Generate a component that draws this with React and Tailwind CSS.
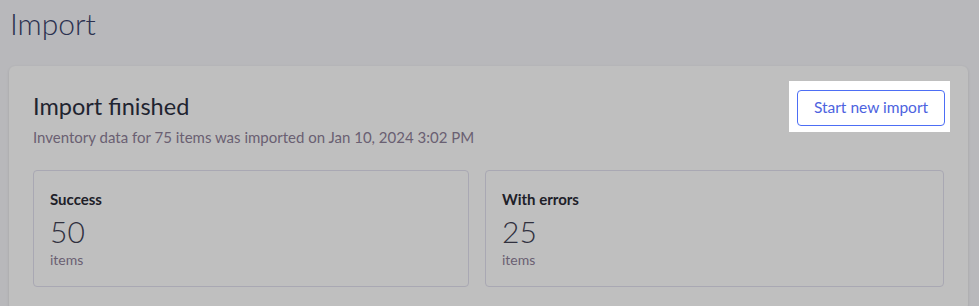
export default function App() {
  const stats = [
    { label: "Success", value: 50 },
    { label: "With errors", value: 25 },
  ];

  return (
    <div
      className="min-h-[306px] overflow-hidden bg-[#b8b8bb] pl-[9px] pr-[11px] pt-[3px]"
      style={{ fontFamily: "Lato, 'Noto Sans', sans-serif" }}
    >
      <h1 className="pl-[1px] text-[30px] font-light leading-[40px] text-[#2b3150]">
        Import
      </h1>

      <section className="mt-[23px] rounded-md bg-[#bfbfbf] px-6 pb-6 pt-6 shadow-[0_1px_3px_rgba(0,0,0,0.12)]">
        <div className="flex items-start justify-between">
          <div>
            <h2 className="text-[23.5px] leading-[32px] text-[#1f2430]">
              Import finished
            </h2>
            <p className="mt-[5px] text-[15px] leading-[20px] text-[#6a6072]">
              Inventory data for 75 items was imported on Jan 10, 2024 3:02 PM
            </p>
          </div>

          <div className="relative -mr-px">
            <span className="absolute -bottom-[6px] -left-2 -right-[5px] -top-[9px] bg-white" />
            <button className="relative h-9 w-[148px] rounded border border-[#4d6ef5] bg-white text-[15.5px] text-[#4d63e0]">
              Start new import
            </button>
          </div>
        </div>

        <div className="mt-[23px] grid grid-cols-[436px_1fr] gap-4">
          {stats.map((s) => (
            <div
              key={s.label}
              className="h-[117px] rounded border border-[#a9a8b3] px-4 pt-[18px]"
            >
              <div className="text-[15px] font-bold leading-[20px] text-[#202028]">
                {s.label}
              </div>
              <div className="mt-[4px] text-[30px] font-light leading-[36px] text-[#30303e]">
                {s.value}
              </div>
              <div className="mt-px text-[14px] leading-[20px] text-[#6a6072]">
                items
              </div>
            </div>
          ))}
        </div>
      </section>
    </div>
  );
}
